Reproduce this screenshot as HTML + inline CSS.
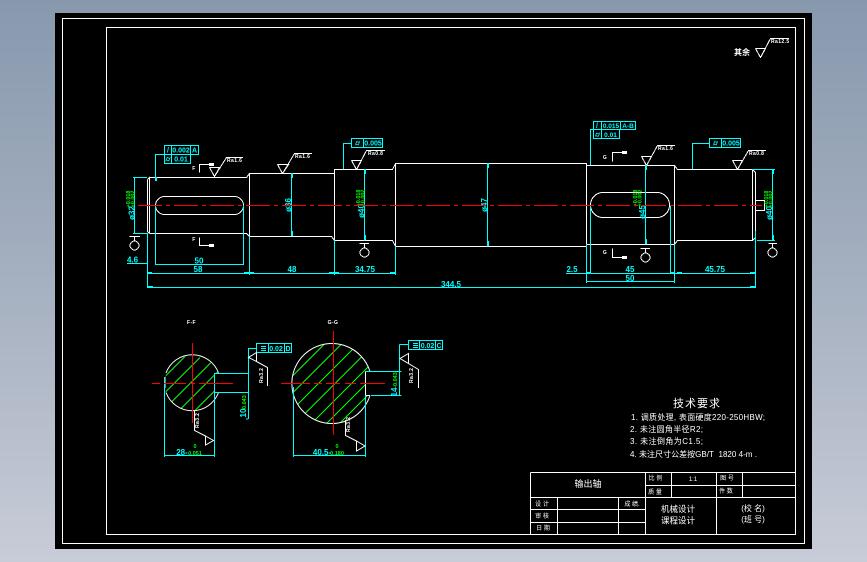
<!DOCTYPE html>
<html><head><meta charset="utf-8"><style>
html,body{margin:0;padding:0;width:867px;height:562px;overflow:hidden;background:linear-gradient(180deg,#8899ae 0%,#a5b0c0 50%,#c8ccd8 100%)}
svg{position:absolute;left:0;top:0}
text{font-family:"Liberation Sans","Noto Sans CJK SC",sans-serif}
.w{stroke:#fff;fill:none;stroke-width:1}
.c{stroke:#0ff;fill:none;stroke-width:1}
.g{stroke:#0f0;fill:none;stroke-width:1}
.tc{fill:#0ff;font-size:8px;text-anchor:middle;font-weight:bold}
.tw{fill:#fff;font-size:8px;text-anchor:middle}
.ts{fill:#fff;font-size:5px;font-weight:bold;letter-spacing:.4px}
.tg{fill:#0f0;font-size:5.5px;font-weight:bold;text-anchor:middle}
.red{position:absolute;background:#f00}
.cl{position:absolute;left:138px;top:205px;width:624px;height:1px;background:repeating-linear-gradient(90deg,#f00 0 24px,transparent 24px 28px,#f00 28px 32px,transparent 32px 36px)}
</style></head><body>
<svg width="867" height="562" viewBox="0 0 867 562" shape-rendering="crispEdges">
<rect x="55" y="13" width="757" height="536" fill="#000"/>
<rect x="62.5" y="18.5" width="742" height="525" class="w"/>
<rect x="106.5" y="27.5" width="689" height="507" class="w"/>

<!-- shaft -->
<path class="w" d="M147.5 179.5V231.5L149.5 233.5M147.5 179.5L149.5 177.5V233.5M149.5 177.5H246.5L249.5 173.5H334.5V169.5H392.5L395.5 163.5H586.5V165.5H674.5L677.5 169.5H752.5L755.5 172.5V237.5L752.5 240.5H677.5L674.5 244.5H586.5V246.5H395.5L392.5 240.5H334.5L331.5 236.5H249.5L246.5 233.5H149.5"/>
<path class="w" d="M249.5 173.5V236.5M334.5 169.5V240.5M395.5 163.5V246.5M586.5 165.5V244.5M674.5 165.5V244.5M752.5 169.5V240.5M755.5 200.5H764.5V210.5H755.5"/>
<rect x="155.5" y="196.5" width="88" height="18" rx="9" ry="9" class="w"/>
<rect x="590.5" y="192.5" width="79" height="25" rx="12.5" ry="12.5" class="w"/>

<!-- roughness symbols -->
<path class="w" d="M209.5 167.5H219.5L214.5 176.5L209.5 167.5M214.5 176.5L226.5 157.5H243"/>
<path class="w" d="M277.5 164.5H288.5L282.5 173.5L277.5 164.5M282.5 173.5L294.5 153.5H312"/>
<path class="w" d="M351.5 160.5H361.5L356.5 169.5L351.5 160.5M356.5 169.5L366.5 150.5H385"/>
<path class="w" d="M641.5 156.5H651.5L646.5 165.5L641.5 156.5M646.5 165.5L657.5 145.5H675"/>
<path class="w" d="M732.5 160.5H742.5L737.5 169.5L732.5 160.5M737.5 169.5L748.5 150.5H766"/>
<path class="w" d="M755.5 48.5H765.5L760.5 57.5L755.5 48.5M760.5 57.5L770.5 38.5H789"/>
<text x="227" y="162" class="ts">Ra1.6</text><text x="295" y="158" class="ts">Ra1.6</text>
<text x="368" y="155" class="ts">Ra0.8</text><text x="658" y="150" class="ts">Ra1.6</text>
<text x="749" y="155" class="ts">Ra0.8</text><text x="771" y="43" class="ts">Ra12.5</text>
<text x="742" y="55" class="tw" style="font-size:8px;font-weight:bold">其余</text>

<!-- section arrows -->
<path class="w" d="M199.5 172.5V164.5H214M199.5 237.5V245.5H214M612.5 161.5V152.5H627M612.5 248.5V257.5H627"/>
<path d="M209 163h5v3h-5zM209 244h5v3h-5zM622 151h5v3h-5zM622 256h5v3h-5z" fill="#fff"/>
<text x="194" y="170" class="ts" text-anchor="middle">F</text><text x="194" y="241" class="ts" text-anchor="middle">F</text>
<text x="605" y="159" class="ts" text-anchor="middle">G</text><text x="605" y="254" class="ts" text-anchor="middle">G</text>

<!-- datum symbols -->
<path class="w" d="M129.5 236.5H140M134.5 236.5V241"/><circle cx="134.5" cy="245.5" r="4.5" class="w"/>
<path class="w" d="M359.5 243.5H369M364.5 243.5V248"/><circle cx="364.5" cy="252.5" r="4.5" class="w"/>
<path class="w" d="M640.5 248.5H650M645.5 248.5V253"/><circle cx="645.5" cy="257.5" r="4.5" class="w"/>
<path class="w" d="M768.5 243.5H777M772.5 243.5V248"/><circle cx="772.5" cy="252.5" r="4.5" class="w"/>

<!-- tolerance frames -->
<path class="c" d="M164.5 145.5H198.5V154.5H190.5V163.5H164.5ZM164.5 154.5H190.5M171.5 145.5V163.5M190.5 145.5V154.5M164.5 154.5H155.5V177"/>
<text x="181" y="152.5" class="tc" style="font-size:7px">0.002</text><text x="194.5" y="152.5" class="tc" style="font-size:7px">A</text>
<text x="168" y="152.5" class="tc" style="font-size:7px">/</text><text x="168" y="161.5" class="tc" style="font-size:7px">⌭</text><text x="181" y="161.5" class="tc" style="font-size:7px">0.01</text>
<path class="c" d="M351.5 138.5H382.5V147.5H351.5ZM363.5 138.5V147.5M351.5 143.5H343.5V169"/>
<text x="357.5" y="145.5" class="tc" style="font-size:7px">⌭</text><text x="373" y="145.5" class="tc" style="font-size:7px">0.005</text>
<path class="c" d="M593.5 121.5H635.5V129.5H593.5ZM593.5 129.5V138.5H619.5V129.5M601.5 121.5V138.5M620.5 121.5V129.5M593.5 129.5H590.5V165"/>
<text x="597" y="128" class="tc" style="font-size:7px">/</text><text x="611" y="128" class="tc" style="font-size:6.5px">0.015</text><text x="628" y="128" class="tc" style="font-size:6.5px">A-B</text>
<text x="597.5" y="137" class="tc" style="font-size:7px">⌭</text><text x="610.5" y="137" class="tc" style="font-size:6.5px">0.01</text>
<path class="c" d="M709.5 138.5H740.5V147.5H709.5ZM721.5 138.5V147.5M709.5 143.5H692.5V169"/>
<text x="715.5" y="145.5" class="tc" style="font-size:7px">⌭</text><text x="731" y="145.5" class="tc" style="font-size:7px">0.005</text>

<!-- dimensions -->
<path class="c" d="M133 177.5H147M133 233.5H147M134.5 177.5V233.5"/>
<path class="c" d="M155.5 205V265M243.5 205V265M155.5 264.5H243.5M127 263.5H147"/>
<path class="c" d="M147.5 233V288M249.5 236V275M334.5 240V275M395.5 246V275M147.5 273.5H395.5M566 273.5H755.5M147.5 287.5H755.5M755.5 231V288"/>
<path class="c" d="M586.5 244V283M674.5 244V283M586.5 281.5H674.5M590.5 205V273M670.5 205V273"/>
<path class="c" d="M291.5 173.5V236.5M364.5 169.5V240.5M487.5 163.5V246.5M645.5 165.5V244.5M772.5 169.5V240.5M752 169.5H775M757 240.5H775"/>
<path d="M291 173h2v5h-2zM291 231h2v5h-2zM364 169h2v5h-2zM364 235h2v5h-2zM487 163h2v5h-2zM487 241h2v5h-2zM645 165h2v5h-2zM645 239h2v5h-2zM772 169h2v5h-2zM772 235h2v5h-2zM155 177h2v4h-2zM147 272h5v2h-5zM244 272h10v2h-10zM329 272h10v2h-10zM390 272h5v2h-5zM148 286h5v2h-5zM750 286h5v2h-5zM586 272h5v2h-5zM670 272h5v2h-5zM677 272h5v2h-5zM750 272h5v2h-5z" fill="#0ff"/>

<text x="132.5" y="262.5" class="tc">4.6</text><text x="199" y="263.5" class="tc">50</text><text x="198" y="272" class="tc">58</text>
<text x="292" y="272" class="tc">48</text><text x="365" y="272" class="tc">34.75</text><text x="451" y="287" class="tc">344.5</text>
<text x="572" y="272" class="tc">2.5</text><text x="630" y="272" class="tc">45</text><text x="715" y="272" class="tc">45.75</text><text x="630" y="281" class="tc">50</text>
<text transform="translate(134.5,213) rotate(-90)" class="tc">ø32</text>
<text transform="translate(291,205) rotate(-90)" class="tc">ø36</text>
<text transform="translate(364,211) rotate(-90)" class="tc">ø40</text>
<text transform="translate(487,205) rotate(-90)" class="tc">ø47</text>
<text transform="translate(645,212) rotate(-90)" class="tc">ø45</text>
<text transform="translate(772,213) rotate(-90)" class="tc">ø40</text>
<text transform="translate(130,199) rotate(-90)" class="tg">+0.018</text><text transform="translate(134.5,199) rotate(-90)" class="tg">+0.002</text>
<text transform="translate(360,198) rotate(-90)" class="tg">+0.018</text><text transform="translate(364.5,198) rotate(-90)" class="tg">+0.002</text>
<text transform="translate(637,198) rotate(-90)" class="tg">+0.018</text><text transform="translate(641.5,198) rotate(-90)" class="tg">+0.002</text>
<text transform="translate(768,199) rotate(-90)" class="tg">+0.018</text><text transform="translate(772.5,199) rotate(-90)" class="tg">+0.002</text>

<!-- sections -->
<defs>
<clipPath id="c1"><path d="M192.5 355.5A28 28 0 0 0 192.5 411.5A28 28 0 0 0 218 392.5H214.5V373.5H218A28 28 0 0 0 192.5 355.5Z"/></clipPath>
<clipPath id="c2"><path d="M333.5 344A40 40 0 1 0 370 395.5L365.5 395.5V371.5H370A40 40 0 0 0 333.5 344Z"/></clipPath>
</defs>
<g clip-path="url(#c1)" class="g">
<path d="M140 401.7L200 341.7M140 417.7L200 357.7M150 423.7L220 353.7M160 429.7L230 359.7M170 435.7L240 365.7"/>
</g>
<g clip-path="url(#c2)" class="g">
<path d="M280 388.7L340 328.7M280 405.4L360 325.4M290 412L380 322M300 418.5L390 328.5M310 425L400 335M320 430L410 340M330 433L420 343"/>
</g>
<path class="w" d="M218 373.5H214.5V392.5H218M166 373A28 28 0 0 1 218.5 373M218.5 392.5A28 28 0 0 1 166 392.5M165 377V388" shape-rendering="auto"/>
<path class="w" d="M370 371.5H365.5V395.5H370M370 371.5A40 40 0 1 0 370 395.5" shape-rendering="auto"/>
<path class="c" d="M164.5 377V457M214.5 373V457M164.5 455.5H214.5M214 373.5H248.5M214 392.5H248.5M248.5 348V419M256 348.5H248.5M246 419H248"/>
<path class="c" d="M256.5 343.5H291.5V352.5H256.5ZM268.5 343.5V352.5M284.5 343.5V352.5"/>
<path class="c" d="M293.5 387V457M365.5 395V457M293.5 455.5H365.5M365 371.5H401.5M371 395.5H401.5M399.5 344.5V395M399.5 344.5H408"/>
<path class="c" d="M408.5 340.5H442.5V349.5H408.5ZM419.5 340.5V349.5M435.5 340.5V349.5"/>
<path d="M261 346h5v1h-5zM261 348h5v1h-5zM261 350h5v1h-5zM413 343h5v1h-5zM413 345h5v1h-5zM413 347h5v1h-5z" fill="#0ff"/>
<text x="276" y="351" class="tc" style="font-size:7px">0.02</text><text x="288" y="351" class="tc" style="font-size:7px">D</text>
<text x="427.5" y="348" class="tc" style="font-size:7px">0.02</text><text x="439" y="348" class="tc" style="font-size:7px">C</text>
<text x="182" y="455" class="tc">28-</text><text x="195" y="455" class="tg">0.051</text><text x="195" y="448" class="tg">0</text>
<text x="322" y="455" class="tc">40.5-</text><text x="337" y="455" class="tg">0.180</text><text x="337" y="448" class="tg">0</text>
<text transform="translate(246,413) rotate(-90)" class="tc">10</text><text transform="translate(246,403) rotate(-90)" class="tg">-0.043</text>
<text transform="translate(397,392) rotate(-90)" class="tc">14</text><text transform="translate(397,380) rotate(-90)" class="tg">-0.043</text>
<text x="191.5" y="324" class="ts" text-anchor="middle">F-F</text><text x="333" y="324" class="ts" text-anchor="middle">G-G</text>
<path class="w" d="M256.5 352.5L248.5 357.5L256.5 361.5ZM256.5 361.5L267.5 367.5V386M194.5 411V430.5L205.5 436M205.5 436L213.5 440.5L205.5 445ZM408.5 353.5L400 358.5L408.5 363.5ZM408.5 363.5L418.5 369.5V388M345.5 420V435.5L356.5 441M356.5 441L365 446L356.5 451Z" shape-rendering="auto"/>
<text transform="translate(263,383) rotate(-90)" class="ts">Ra3.2</text><text transform="translate(413,383) rotate(-90)" class="ts">Ra3.2</text>
<text transform="translate(199,428) rotate(-90)" class="ts">Ra3.2</text><text transform="translate(350,432) rotate(-90)" class="ts">Ra3.2</text>

<!-- title block -->
<path class="w" d="M530.5 472.5H795.5V534.5M530.5 472.5V534.5H795.5M645.5 485.5H795.5M530.5 497.5H795.5M530.5 509.5H645.5M530.5 522.5H645.5M645.5 472.5V534.5M671.5 472.5V497.5M716.5 472.5V534.5M742.5 472.5V497.5M557.5 497.5V534.5M618.5 497.5V534.5"/>
<g fill="#fff" style="font-size:8px" text-anchor="middle">
<text x="697" y="407" style="font-size:11px" letter-spacing="1">技术要求</text>
<text x="588" y="487" style="font-size:9px">输出轴</text>
<text x="655.5" y="480" style="font-size:6px">比 例</text><text x="693" y="481" style="font-size:6px">1:1</text><text x="727" y="480" style="font-size:6px">图 号</text>
<text x="655" y="494" style="font-size:6px">质 量</text><text x="726" y="493" style="font-size:6px">件 数</text>
<text x="542" y="506" style="font-size:6px">设 计</text><text x="542" y="518" style="font-size:6px">审 核</text><text x="543" y="530" style="font-size:6px">日 期</text>
<text x="632" y="506" style="font-size:6px">成 绩.</text>
<text x="678" y="512" style="font-size:8.5px">机械设计</text><text x="678" y="523.5" style="font-size:8.5px">课程设计</text>
<text x="753" y="511">(校 名)</text><text x="753" y="522">(班 号)</text>
</g>
<g fill="#fff" style="font-size:8px">
<text x="631" y="420" textLength="134" lengthAdjust="spacing">1. 调质处理, 表面硬度220-250HBW;</text>
<text x="630" y="432" textLength="73" lengthAdjust="spacing">2. 未注圆角半径R2;</text>
<text x="630" y="444" textLength="73" lengthAdjust="spacing">3. 未注倒角为C1.5;</text>
<text x="630" y="457" textLength="127" lengthAdjust="spacing">4. 未注尺寸公差按GB/T&#160; 1820 4-m .</text>
</g>
</svg>
<div class="cl"></div>
<div class="red" style="left:152px;top:383px;width:8px;height:1px"></div>
<div class="red" style="left:164px;top:383px;width:22px;height:1px"></div>
<div class="red" style="left:190px;top:383px;width:5px;height:1px"></div>
<div class="red" style="left:199px;top:383px;width:34px;height:1px"></div>
<div class="red" style="left:192px;top:343px;width:1px;height:80px"></div>
<div class="red" style="left:281px;top:383px;width:29px;height:1px"></div>
<div class="red" style="left:314px;top:383px;width:8px;height:1px"></div>
<div class="red" style="left:326px;top:383px;width:14px;height:1px"></div>
<div class="red" style="left:345px;top:383px;width:11px;height:1px"></div>
<div class="red" style="left:360px;top:383px;width:25px;height:1px"></div>
<div class="red" style="left:333px;top:331px;width:1px;height:104px"></div>
</body></html>
